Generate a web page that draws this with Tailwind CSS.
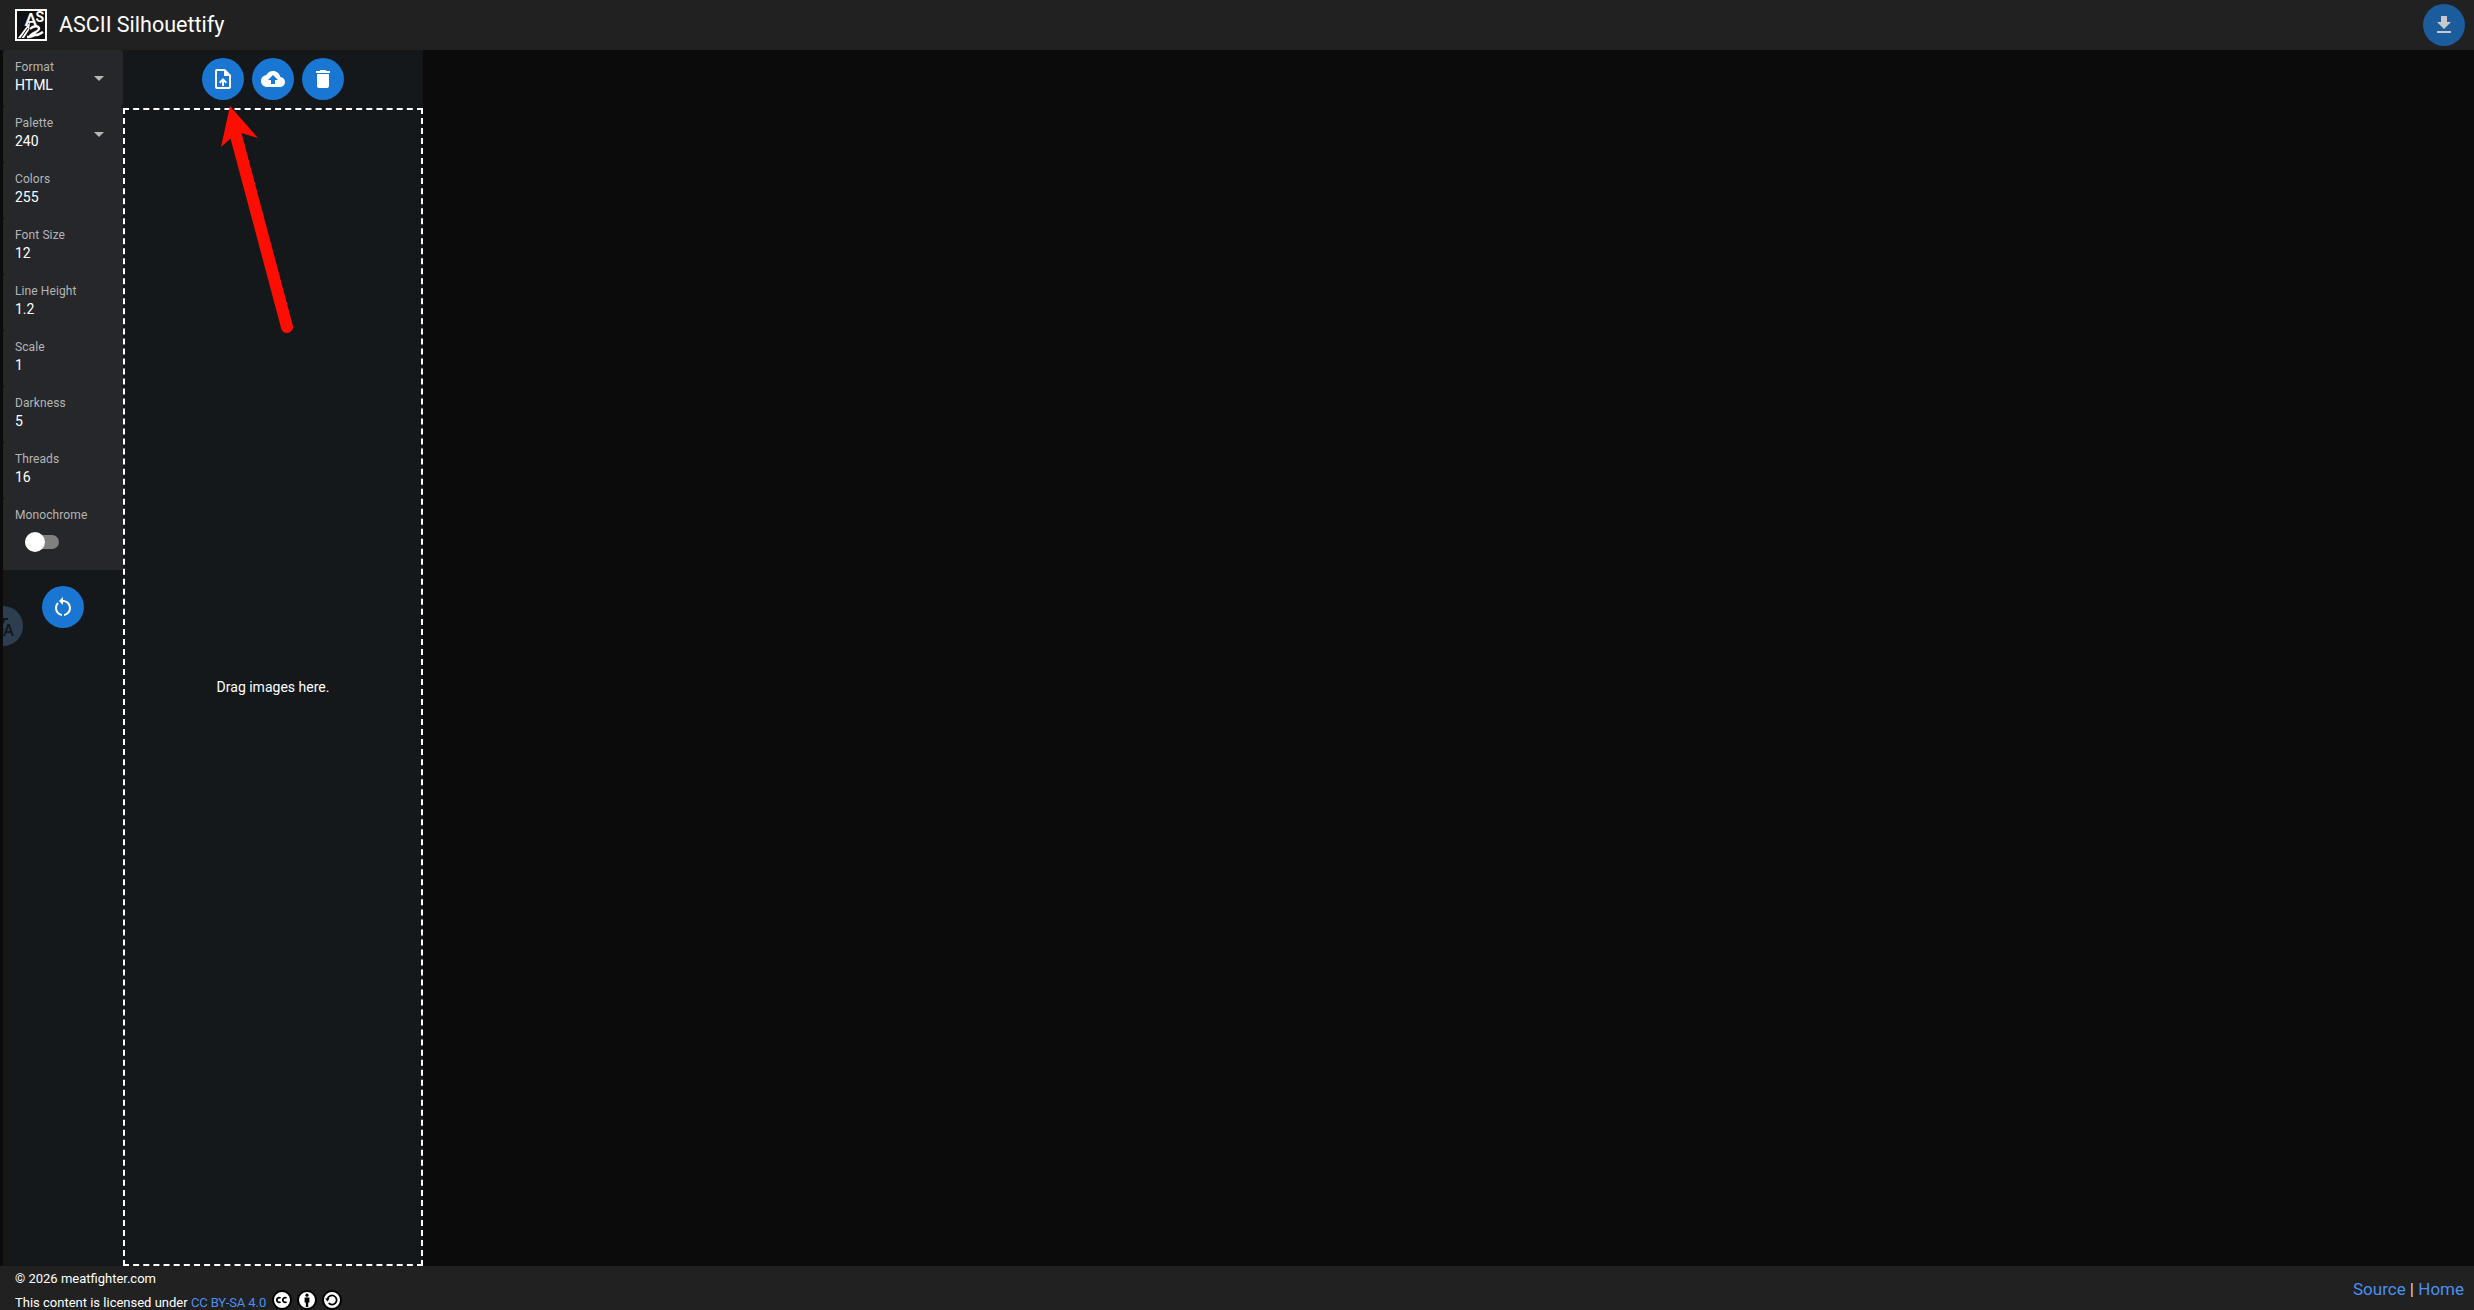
<!DOCTYPE html>
<html lang="en">
<head>
<meta charset="UTF-8">
<title>ASCII Silhouettify</title>
<script src="https://cdn.jsdelivr.net/npm/@tailwindcss/browser@4"></script>
</head>
<body class="bg-[#0b0b0b] text-white font-['Roboto',sans-serif]">
<div class="relative flex flex-col h-[1310px] overflow-hidden">

  <!-- header -->
  <header class="flex items-center justify-between h-[50px] shrink-0 pl-[15px] pr-[9px] bg-[#212121]">
    <div class="flex items-center gap-[12px]">
      <svg class="w-[32px] h-[32px]" viewBox="0 0 32 32">
        <rect x="1" y="1" width="30" height="30" fill="#111" stroke="#fff" stroke-width="2"/>
        <text x="9.5" y="16.5" font-size="19" font-weight="500" fill="#fff" font-family="Roboto">A</text>
        <text x="20.5" y="13" font-size="14" font-weight="700" fill="#fff" font-family="Roboto">S</text>
        <path d="M3 29 L15 13 L14 21 L9 29z" fill="#fff"/>
        <path d="M6 29 L13 19" stroke="#111" stroke-width="1" fill="none"/>
        <path d="M15 20c3-3 8-4 9-1s-5 4-8 7c4 1 8 0 12-3M12 28c3 0 7-1 9-3" stroke="#fff" stroke-width="2.4" fill="none"/>
      </svg>
      <span class="text-[21.5px] font-normal leading-none">ASCII Silhouettify</span>
    </div>
    <button class="flex items-center justify-center w-[42px] h-[42px] rounded-full bg-[#1a5c9c]">
      <svg class="w-6 h-6 fill-[#c8c8c8]" viewBox="0 0 24 24"><path d="M19 9h-4V3H9v6H5l7 7 7-7zM5 18v2h14v-2H5z"/></svg>
    </button>
  </header>

  <!-- middle -->
  <div class="flex flex-1 min-h-0">
    <div class="ml-[3px] flex flex-col w-[120px] shrink-0 bg-[#14181b]">
      <div class="flex flex-col bg-[#14181b] text-[14px]">
        <div class="relative h-[56px] px-[12px] pt-[9px] bg-[#25272b] rounded-[3px]">
          <div class="text-[12px] tracking-[0.1px] leading-[16px] text-[#b5b5b5]">Format</div>
          <div class="leading-[20px]">HTML</div>
          <div class="absolute right-[19px] top-[26px] w-0 h-0 border-x-[5px] border-x-transparent border-t-[5px] border-t-[#b8b8b8]"></div>
        </div>
        <div class="relative h-[56px] px-[12px] pt-[9px] bg-[#25272b] rounded-[3px]">
          <div class="text-[12px] tracking-[0.1px] leading-[16px] text-[#b5b5b5]">Palette</div>
          <div class="leading-[20px]">240</div>
          <div class="absolute right-[19px] top-[26px] w-0 h-0 border-x-[5px] border-x-transparent border-t-[5px] border-t-[#b8b8b8]"></div>
        </div>
        <div class="h-[56px] px-[12px] pt-[9px] bg-[#25272b] rounded-[3px]">
          <div class="text-[12px] tracking-[0.1px] leading-[16px] text-[#b5b5b5]">Colors</div>
          <div class="leading-[20px]">255</div>
        </div>
        <div class="h-[56px] px-[12px] pt-[9px] bg-[#25272b] rounded-[3px]">
          <div class="text-[12px] tracking-[0.1px] leading-[16px] text-[#b5b5b5]">Font Size</div>
          <div class="leading-[20px]">12</div>
        </div>
        <div class="h-[56px] px-[12px] pt-[9px] bg-[#25272b] rounded-[3px]">
          <div class="text-[12px] tracking-[0.1px] leading-[16px] text-[#b5b5b5]">Line Height</div>
          <div class="leading-[20px]">1.2</div>
        </div>
        <div class="h-[56px] px-[12px] pt-[9px] bg-[#25272b] rounded-[3px]">
          <div class="text-[12px] tracking-[0.1px] leading-[16px] text-[#b5b5b5]">Scale</div>
          <div class="leading-[20px]">1</div>
        </div>
        <div class="h-[56px] px-[12px] pt-[9px] bg-[#25272b] rounded-[3px]">
          <div class="text-[12px] tracking-[0.1px] leading-[16px] text-[#b5b5b5]">Darkness</div>
          <div class="leading-[20px]">5</div>
        </div>
        <div class="h-[56px] px-[12px] pt-[9px] bg-[#25272b] rounded-[3px]">
          <div class="text-[12px] tracking-[0.1px] leading-[16px] text-[#b5b5b5]">Threads</div>
          <div class="leading-[20px]">16</div>
        </div>
        <div class="h-[72px] px-[12px] pt-[9px] bg-[#25272b] rounded-t-[3px]">
          <div class="text-[12px] tracking-[0.1px] leading-[16px] text-[#b5b5b5]">Monochrome</div>
          <div class="relative mt-[12px] ml-[10px] w-[34px] h-[14px] rounded-full bg-[#808080]">
            <div class="absolute left-0 top-[-3px] w-[20px] h-[20px] rounded-full bg-white"></div>
          </div>
        </div>
      </div>
      <button class="mt-[16px] ml-[39px] flex items-center justify-center w-[42px] h-[42px] rounded-full bg-[#1976d2]">
        <svg class="w-6 h-6 fill-white" viewBox="0 0 24 24"><path d="M12 5V2L8 6l4 4V7c3.31 0 6 2.69 6 6 0 2.97-2.17 5.43-5 5.91v2.02c3.95-.49 7-3.85 7-7.93 0-4.42-3.58-8-8-8zm-6 8c0-1.65.67-3.15 1.76-4.24L6.34 7.34C4.9 8.79 4 10.79 4 13c0 4.08 3.05 7.44 7 7.93v-2.02c-2.83-.48-5-2.94-5-5.91z"/></svg>
      </button>
    </div>

    <div class="flex flex-col w-[300px] shrink-0 bg-[#14181b]">
      <div class="flex items-center justify-center gap-[8px] h-[58px] shrink-0">
        <button class="flex items-center justify-center w-[42px] h-[42px] rounded-full bg-[#1976d2]">
          <svg class="w-6 h-6 fill-white" viewBox="0 0 24 24"><path d="M14 2H6c-1.1 0-1.99.9-1.99 2L4 20c0 1.1.89 2 1.99 2H18c1.1 0 2-.9 2-2V8l-6-6zm4 18H6V4h7v5h5v11zM8 15.01l1.41 1.41L11 14.84V19h2v-4.16l1.59 1.59L16 15.01 12.01 11 8 15.01z"/></svg>
        </button>
        <button class="flex items-center justify-center w-[42px] h-[42px] rounded-full bg-[#1976d2]">
          <svg class="w-6 h-6 fill-white" viewBox="0 0 24 24"><path d="M19.35 10.04C18.67 6.59 15.64 4 12 4 9.11 4 6.6 5.64 5.35 8.04 2.34 8.36 0 10.91 0 14c0 3.31 2.69 6 6 6h13c2.76 0 5-2.24 5-5 0-2.64-2.05-4.78-4.65-4.96zM14 13v4h-4v-4H7l5-5 5 5h-3z"/></svg>
        </button>
        <button class="flex items-center justify-center w-[42px] h-[42px] rounded-full bg-[#1976d2]">
          <svg class="w-6 h-6 fill-white" viewBox="0 0 24 24"><path d="M6 19c0 1.1.9 2 2 2h8c1.1 0 2-.9 2-2V7H6v12zM19 4h-3.5l-1-1h-5l-1 1H5v2h14V4z"/></svg>
        </button>
      </div>
      <div class="flex flex-1 items-center justify-center border-2 border-dashed border-white text-[14px]">Drag images here.</div>
    </div>
    <div class="flex-1"></div>
  </div>

  <!-- footer -->
  <footer class="flex items-center justify-between h-[44px] shrink-0 pl-[15px] pr-[10px] bg-[#212121]">
    <div class="self-start text-[13px] leading-[24px] pt-[1px]">
      <div>© 2026 meatfighter.com</div>
      <div class="flex items-center">
        <span>This content is licensed under&nbsp;</span>
        <a class="text-[#4a90f0] tracking-[-0.1px]">CC BY-SA 4.0</a>
        <span class="flex gap-[5px] ml-[6px] -mt-[6px]">
          <svg class="w-[20px] h-[20px]" viewBox="0 0 20 20"><circle cx="10" cy="10" r="9" fill="#fff" stroke="#000" stroke-width="2"/><path d="M8.6 8.2a2.3 2.3 0 1 0 0 3.6M14.6 8.2a2.3 2.3 0 1 0 0 3.6" fill="none" stroke="#000" stroke-width="1.7"/></svg>
          <svg class="w-[20px] h-[20px]" viewBox="0 0 20 20"><circle cx="10" cy="10" r="9" fill="#fff" stroke="#000" stroke-width="2"/><circle cx="10" cy="5.2" r="1.6"/><path d="M7.6 7.6h4.8v5h-1.2V17H8.8v-4.4H7.6z"/></svg>
          <svg class="w-[20px] h-[20px]" viewBox="0 0 20 20"><circle cx="10" cy="10" r="9" fill="#fff" stroke="#000" stroke-width="2"/><path d="M5.5 9.2a4.6 4.6 0 1 1 1.2 4" fill="none" stroke="#000" stroke-width="1.8"/><path d="M3.2 8.6h4.4L5.4 11.4z"/></svg>
        </span>
      </div>
    </div>
    <div class="text-[17px] pt-[3px] text-[#e0d8c0]"><a class="text-[#4a90f0]">Source</a> | <a class="text-[#4a90f0]">Home</a></div>
  </footer>

  <!-- language button peeking out of the left edge -->
  <div class="absolute left-[-17px] top-[606px] flex items-center justify-center w-[40px] h-[40px] rounded-full bg-[#2c3e50]">
    <svg class="w-6 h-6 fill-[#14181b]" viewBox="0 0 24 24"><path d="m12.87 15.07-2.54-2.51.03-.03c1.74-1.94 2.98-4.17 3.71-6.53H17V4h-7V2H8v2H1v1.99h11.17C11.5 7.92 10.44 9.75 9 11.35 8.07 10.32 7.3 9.19 6.69 8h-2c.73 1.63 1.73 3.17 2.98 4.56l-5.09 5.02L4 19l5-5 3.11 3.11.76-2.04zM18.5 10h-2L12 22h2l1.12-3h4.75L21 22h2l-4.5-12zm-2.62 7 1.62-4.33L19.12 17h-3.24z"/></svg>
  </div>
  <div class="absolute left-0 top-[50px] w-[3px] h-[1216px] bg-[#0b0b0b]"></div>

  <!-- annotation arrow -->
  <svg class="absolute left-0 top-0 w-[400px] h-[400px] pointer-events-none" viewBox="0 0 400 400">
    <path d="M235 132 L287 327" stroke="#ff0d00" stroke-width="12" stroke-linecap="round" fill="none"/>
    <path d="M230 106 L258 138 L238 132 L221 147z" fill="#ff0d00"/>
  </svg>
</div>
</body>
</html>
